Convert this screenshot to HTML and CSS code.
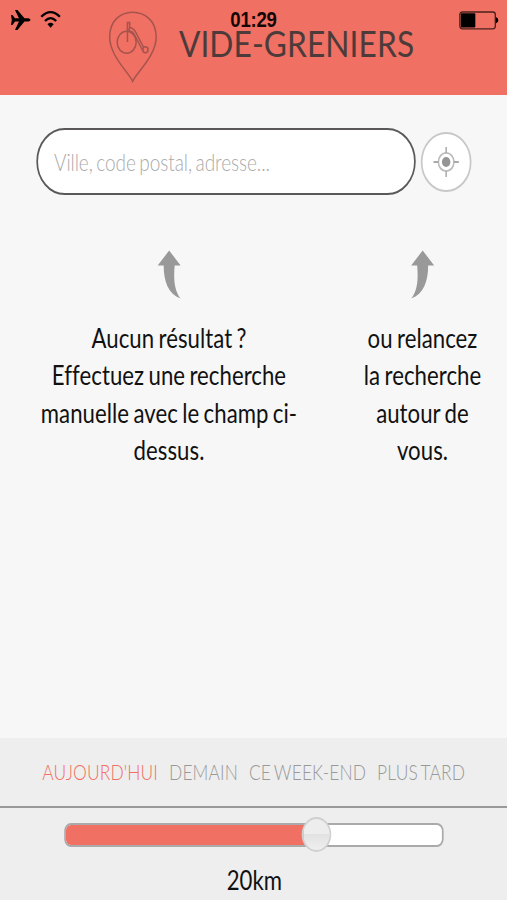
FILE: index.html
```html
<!DOCTYPE html>
<html lang="fr">
<head>
<meta charset="utf-8">
<title>Vide-Greniers</title>
<link rel="stylesheet" href="styles.css">
</head>
<body>
<div class="screen">
  <div class="status">
    <svg class="status-left" viewBox="0 0 60 24" preserveAspectRatio="none">
      <path d="M0 5 L1.500 5 L4 8.300 L8 8.300 L4 0 L6.500 0 L13.500 8.300 L17.500 8.300 Q19.500 9 19.500 9.900 Q19.500 10.800 17.500 11.500 L13.500 11.500 L6.500 20 L4 20 L8 11.500 L4 11.500 L1.500 15 L0 15 L.8 9.900 Z"/>
      <g fill="none" stroke="#000" stroke-width="2.300"><path d="M30.300 6.800 Q39.600 -2.600 48.900 6.800"/><path d="M34 11 Q39.600 5.300 45.200 11"/></g>
      <path d="M36.500 14.200 Q39.600 11.300 42.700 14.200 L39.600 17.800 Z"/>
    </svg>
    <span class="clock">01:29</span>
    <svg class="battery" viewBox="0 0 40 19" preserveAspectRatio="none">
      <rect x="1" y="1" width="35.500" height="16.800" rx="2.500" fill="none" stroke="#4a201c" stroke-width="1.300"/>
      <rect x="2" y="2.200" width="14.500" height="14.400" rx="1"/>
      <path d="M37 6 Q39.500 6.700 39.500 9.300 Q39.500 12 37 12.600 Z"/>
    </svg>
  </div>
  <header class="header">
    <svg class="logo" viewBox="0 0 50 72" preserveAspectRatio="none">
      <g fill="none" stroke="#a5544d" stroke-width="1.500">
        <path d="M24.500 70.300 C21 62 1.500 45 1.500 26 C1.500 10 12 1.300 24.500 1.300 C37 1.300 48 10 48 26 C48 45 28 62 24.500 70.300 Z"/>
        <ellipse cx="18.500" cy="31.300" rx="9.500" ry="11"/>
        <ellipse cx="37.300" cy="38.800" rx="2.600" ry="3"/>
        <path d="M19.300 31 V11.500 H21.500 V16.500 Q25.500 17 28 22 L35.500 36.500 M21 17 V20 Q24.500 20 27 25 L34.500 39.500"/>
      </g>
    </svg>
    <h1 class="title">VIDE-GRENIERS</h1>
  </header>
  <main class="main">
    <div class="search">
      <input class="field" type="text" placeholder="Ville, code postal, adresse...">
      <button class="locate" aria-label="Autour de moi">
        <svg viewBox="0 0 32 32">
          <circle cx="16" cy="16" r="9.200" fill="none" stroke="#bbb" stroke-width="1.800"/>
          <circle cx="16" cy="16" r="5" fill="#959595"/>
          <path d="M16 1 V7 M16 25 V31 M1 16 H7 M25 16 H31" stroke="#aaa" stroke-width="1.800"/>
        </svg>
      </button>
    </div>
    <div class="hints">
      <section class="hint hint-wide">
        <svg class="arrow" viewBox="0 0 24 49" preserveAspectRatio="none"><path d="M12 .5 L23.500 15.500 H17.500 C16.500 27 16.500 40 23.500 48.500 C11 44 6.500 31 6.500 15.500 H.5 Z"/></svg>
        <p>Aucun résultat ?<br>Effectuez une recherche<br>manuelle avec le champ ci-<br>dessus.</p>
      </section>
      <section class="hint">
        <svg class="arrow" viewBox="0 0 24 49" preserveAspectRatio="none"><path d="M12 .5 L.5 15.500 H6.500 C7.500 27 7.500 40 .5 48.500 C13 44 17.500 31 17.500 15.500 H23.500 Z"/></svg>
        <p>ou relancez<br>la recherche<br>autour de<br>vous.</p>
      </section>
    </div>
  </main>
  <footer class="footer">
    <nav class="tabs">
      <a class="tab active">AUJOURD'HUI</a><a class="tab">DEMAIN</a><a class="tab">CE WEEK-END</a><a class="tab">PLUS TARD</a>
    </nav>
    <div class="range">
      <div class="track"><div class="fill"></div><div class="thumb"></div></div>
      <div class="distance">20km</div>
    </div>
  </footer>
</div>
</body>
</html>
```
FILE: styles.css
```css
* { box-sizing: border-box; }
html, body { margin: 0; width: 507px; height: 900px; overflow: hidden; }
body { font-family: Lato, sans-serif; background: #f7f7f7; }

/* 600px wide layout condensed to the width of the window */
.screen {
  position: relative;
  display: flex;
  flex-direction: column;
  width: 600px;
  height: 900px;
  transform: scaleX(0.845);
  transform-origin: 0 0;
  background: #f7f7f7;
  color: #111;
  font-variant-ligatures: none;
}

.status {
  position: absolute;
  inset: 0 0 auto 0;
  height: 40px;
  display: flex;
  justify-content: space-between;
  align-items: flex-start;
  padding: 10px 10px 0 12.500px;
}
.status-left { width: 71px; height: 24px; }
.clock {
  position: absolute;
  left: 0;
  right: 0;
  top: 8px;
  text-align: center;
  font: bold 22px/24px "Liberation Sans", sans-serif;
  letter-spacing: -0.3px;
  color: #150605;
}
.battery { width: 47.300px; height: 19px; margin-top: 1px; }

.header {
  display: flex;
  flex: none;
  height: 94.500px;
  padding: 11px 0 0 128px;
  background: #f07063;
}
.logo { flex: none; width: 59.200px; height: 72px; }
.title {
  margin: 9px 0 0 24.500px;
  font-size: 37.500px;
  font-weight: 400;
  line-height: 45px;
  letter-spacing: 0.1px;
  white-space: nowrap;
  color: #4c3b3a;
}

.main { flex: 1; padding-top: 33.500px; }
.search { display: flex; align-items: center; padding-left: 43px; gap: 6px; }
.field {
  width: 449px;
  height: 67px;
  padding: 2px 19px 0;
  border: 2px solid #5a5858;
  border-radius: 34px;
  background: #fff;
  font: 300 22.500px Lato, sans-serif;
  letter-spacing: -0.1px;
  word-spacing: -1.800px;
}
.field::placeholder { color: #aaa; opacity: 1; }
.locate {
  display: flex;
  align-items: center;
  justify-content: center;
  width: 60px;
  height: 60px;
  padding: 0;
  border: 2px solid #c8c8c8;
  border-radius: 50%;
  background: #fff;
}
.locate svg { width: 32px; height: 32px; }

.hints { display: flex; padding-top: 55px; }
.hint { display: flex; flex-direction: column; align-items: center; width: 200px; }
.hint-wide { width: 400px; }
.arrow { width: 28.400px; height: 49px; fill: #999; }
.hint p {
  margin: 20.500px 0 0;
  font-size: 26.250px;
  line-height: 37.500px;
  letter-spacing: 0.05px;
  word-spacing: -1.600px;
  text-align: center;
  white-space: nowrap;
}

.footer { flex: none; height: 162px; background: #eee; }
.tabs {
  display: flex;
  align-items: center;
  height: 70px;
  padding: 0 0 0 50px;
  gap: 13px;
  border-bottom: 2px solid #999;
}
.tab {
  font-size: 20.600px;
  font-weight: 300;
  letter-spacing: 0.15px;
  word-spacing: -2px;
  color: #999;
  white-space: nowrap;
}
.active { color: #f07063; }
.range { padding: 15px 74px 0 76px; }
.track {
  position: relative;
  width: 449px;
  height: 24px;
  border: 2px solid #aaa;
  border-radius: 8px;
  background: #fff;
}
.fill { width: 298px; height: 20px; border-radius: 6px 0 0 6px; background: #f07063; }
.thumb {
  position: absolute;
  left: 279px;
  top: -8px;
  width: 35px;
  height: 35px;
  border: 2px solid #d0d0d0;
  border-radius: 50%;
  background: linear-gradient(#ededed 50%, #e2e2e2 50%, #efefef);
}
.distance { margin-top: 15px; font-size: 26.250px; line-height: 37.500px; text-align: center; }
```
